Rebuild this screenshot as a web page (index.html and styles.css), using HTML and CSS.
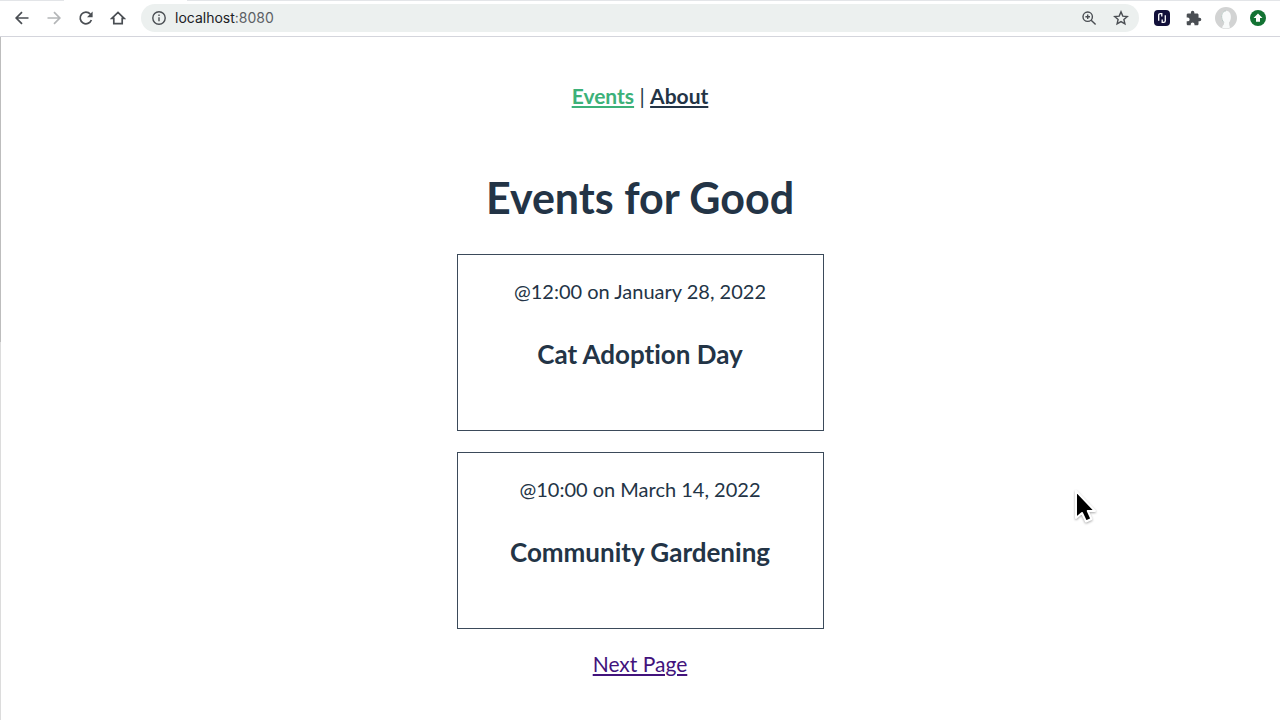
FILE: index.html
```html
<!DOCTYPE html>
<html lang="en">
<head>
<meta charset="utf-8">
<meta name="viewport" content="width=device-width, initial-scale=1">
<title>Events for Good</title>
<link rel="stylesheet" href="styles.css">
</head>
<body>
<header class="toolbar">
  <div class="controls">
    <button class="icon-button" aria-label="Back"><svg viewBox="0 0 16 16"><path class="line" d="M14.5 8H2.5M8 2.2L2.2 8L8 13.8"/></svg></button>
    <button class="icon-button faded" aria-label="Forward"><svg viewBox="0 0 16 16"><path class="line" d="M1.5 8H13.5M8 2.2L13.8 8L8 13.8"/></svg></button>
    <button class="icon-button" aria-label="Reload"><svg viewBox="0 0 16 16"><path class="line" d="M13.4 10A5.8 5.8 0 1 1 12.3 4.1"/><path class="solid" d="M14.6 1.6V7.2H9z"/></svg></button>
    <button class="icon-button" aria-label="Home"><svg viewBox="0 0 16 16"><path class="line" d="M1.8 8.4L8 2.4L14.2 8.4H12.2V13.6H3.8V8.4Z"/></svg></button>
  </div>
  <div class="address">
    <svg class="icon" viewBox="0 0 16 16"><circle class="thin" cx="8" cy="8" r="6.2"/><path class="thin" d="M8 7.2V11.2M8 4.6V6"/></svg>
    <div class="url" role="textbox" aria-label="Address"><span class="host">localhost</span>:8080</div>
    <button class="icon-button" aria-label="Zoom"><svg viewBox="0 0 16 16"><circle class="thin" cx="6.7" cy="6.7" r="4.7"/><path class="thin" d="M10.2 10.2L14.6 14.6M4.4 6.7H9M6.7 4.4V9"/></svg></button>
    <button class="icon-button" aria-label="Bookmark"><svg viewBox="0 0 16 16"><path class="thin" d="M8 1.9L9.8 6.1L14.3 6.5L10.9 9.5L11.9 13.9L8 11.6L4.1 13.9L5.1 9.5L1.7 6.5L6.2 6.1Z"/></svg></button>
  </div>
  <div class="extensions">
    <button class="icon-button" aria-label="Extension"><svg viewBox="0 0 16 16"><rect width="16" height="16" rx="4" fill="#12103a"/><path d="M4.700 10.800V5.200Q4.700 3.600 6.300 3.600H7.800V6.400M11.300 5.200V10.800Q11.300 12.400 9.700 12.400H8.200V9.600" fill="none" stroke="#fff" stroke-width="1.3"/></svg></button>
    <button class="icon-button" aria-label="Extensions"><svg viewBox="1 0 23 23"><path class="solid" d="M20.5 11H19V7c0-1.1-.9-2-2-2h-4V3.5a2.5 2.5 0 0 0-5 0V5H4c-1.1 0-2 .9-2 2v3.8h1.5a2.7 2.7 0 0 1 0 5.4H2V20c0 1.100.9 2 2 2h3.800v-1.500a2.700 2.700 0 0 1 5.400 0V22H17c1.100 0 2-.9 2-2v-4h1.500a2.500 2.500 0 0 0 0-5z"/></svg></button>
    <button class="icon-button avatar" aria-label="Profile"><svg viewBox="0 0 22 22"><circle cx="11" cy="11" r="11" fill="#d2d3d3"/><path d="M8 18.500Q9.500 17.500 8.800 15.500C4.800 12.500 5.200 3.800 11 3.800S17 12.500 14 15.500Q14 18 15 20.500Q11 22.500 7 20.500Z" fill="#f8fafa"/><path d="M8.800 15.500C5.600 12 5.600 4.200 11 3.800" fill="none" stroke="#b8c6c2"/></svg></button>
    <button class="icon-button" aria-label="Update available"><svg viewBox="0 0 16 16"><circle cx="8" cy="8" r="8" fill="#137333"/><path d="M8 3.500L12.500 8H10V11.800H6V8H3.500Z" fill="#fff"/></svg></button>
  </div>
</header>
<div class="page">
  <nav class="nav"><a class="nav-link active" href="#events">Events</a> | <a class="nav-link" href="#about">About</a></nav>
  <main class="events">
    <h1 class="title">Events for Good</h1>
    <article class="card">
      <p class="time">@12:00 on January 28, 2022</p>
      <h2 class="name">Cat Adoption Day</h2>
    </article>
    <article class="card">
      <p class="time">@10:00 on March 14, 2022</p>
      <h2 class="name">Community Gardening</h2>
    </article>
    <a class="next" href="#page-2">Next Page</a>
  </main>
</div>
<svg class="pointer" viewBox="0 0 26 40" aria-hidden="true"><path d="M3 4V31L9 26L13 34.500L18.500 32L14.800 24H22Z" fill="#000" stroke="#fff" stroke-width="2" stroke-linejoin="round"/></svg>
</body>
</html>
```
FILE: styles.css
```css
* {
  box-sizing: border-box;
}

body {
  margin: 0;
  min-height: 100vh;
  display: flex;
  flex-direction: column;
  background: #fff;
  color: #233446;
  font-family: Lato, "Liberation Sans", sans-serif;
  font-variant-ligatures: none;
}

.toolbar {
  display: flex;
  align-items: center;
  gap: 15px;
  padding: 4px 14px;
  border-bottom: 1px solid #d4d5dc;
  background: linear-gradient(to right, #e3e5e8 64px, #fff 64px 187px, #e3e5e8 187px) top / 100% 1px no-repeat;
  color: #4a4e53;
}

.controls,
.extensions {
  display: flex;
  align-items: center;
  gap: 16px;
}

.icon-button {
  display: block;
  width: 16px;
  height: 16px;
  padding: 0;
  border: 0;
  background: none;
  color: inherit;
}

.icon-button svg,
.icon {
  display: block;
  width: 100%;
  height: 100%;
}

.icon {
  flex: none;
  width: 16px;
  height: 16px;
}

.faded {
  color: #b4b6b8;
}

.avatar {
  width: 22px;
  height: 22px;
  margin: 0 -3px;
}

.line,
.thin {
  fill: none;
  stroke: currentColor;
  stroke-width: 1.7;
}

.thin {
  stroke-width: 1.4;
}

.solid {
  fill: currentColor;
}

.address {
  flex: 1;
  display: flex;
  align-items: center;
  gap: 16px;
  height: 28px;
  padding: 0 10px;
  border-radius: 14px;
  background: #ecf0ef;
}

.url {
  flex: 1;
  margin-left: -8px;
  color: #5c6165;
  font: 14px/20px Inter, sans-serif;
}

.host {
  color: #202124;
}

.page {
  flex: 1;
  background: linear-gradient(#bdbdbd 305px, #dcdcdc 305px) left / 1px 100% no-repeat;
  text-align: center;
  font-size: 20px;
  line-height: 28px;
}

.nav {
  padding: 45px 20px 46px;
  font-size: 21px;
}

.nav-link {
  color: inherit;
  font-weight: 700;
}

.active {
  color: #3cb179;
}

.events {
  display: flex;
  flex-direction: column;
  align-items: center;
}

.title {
  margin: 12px 0 26px;
  font-size: 43px;
  line-height: 60px;
}

.card {
  width: 367px;
  max-width: 100%;
  margin-bottom: 21px;
  padding: 22px 20px 60px;
  border: 1px solid #3b4a5a;
}

.time {
  margin: 0 0 33px;
}

.name {
  margin: 0;
  font-size: 26px;
  line-height: 32px;
}

.next {
  color: #42137c;
  font-size: 21px;
}

.pointer {
  position: absolute;
  top: 487px;
  left: 1073px;
  width: 26px;
  height: 40px;
  filter: drop-shadow(0 1px 1px #0005);
}
```
